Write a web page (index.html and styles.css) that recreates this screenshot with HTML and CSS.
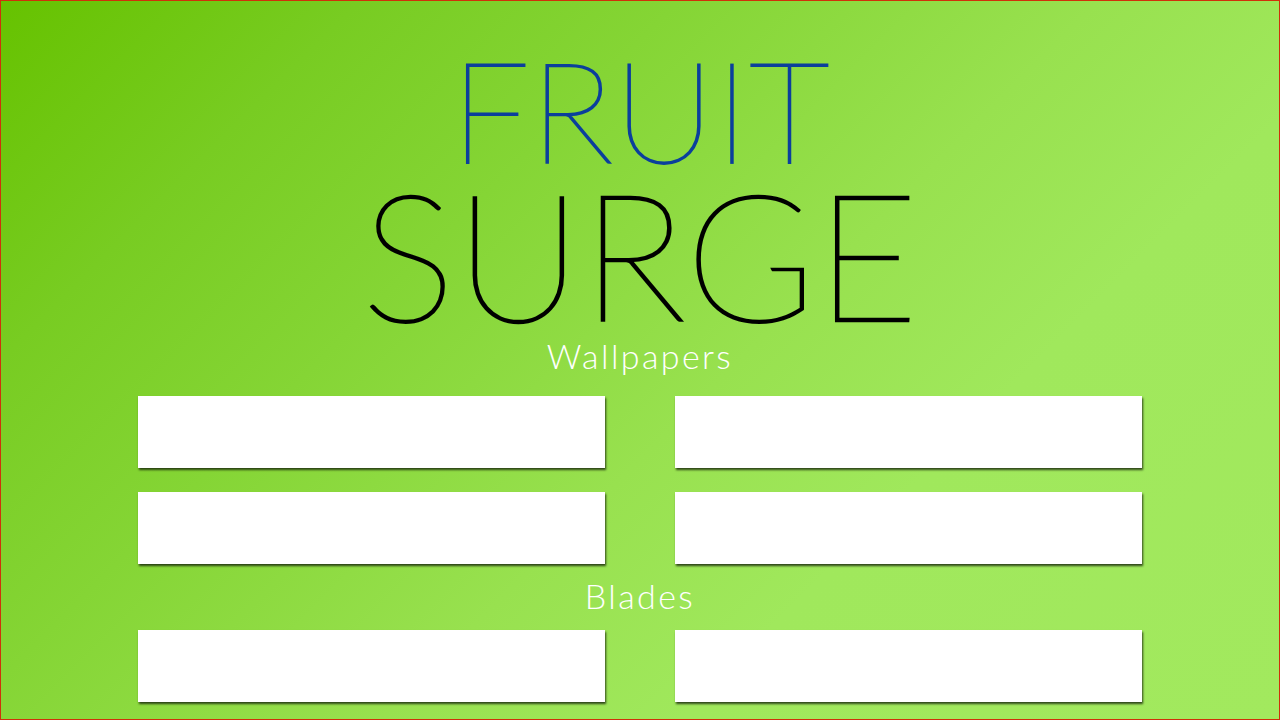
FILE: index.html
```html
<!DOCTYPE html>
<html lang="en">
<head>
<meta charset="utf-8">
<title>Fruit Surge</title>
<link rel="stylesheet" href="styles.css">
</head>
<body>
<main class="page">
  <h1 class="logo">
    <span class="logo-top">FRUIT</span>
    <span class="logo-bottom">SURGE</span>
  </h1>
  <section class="group group-wallpapers">
    <h2 class="group-title">Wallpapers</h2>
    <div class="cards">
      <div class="card"></div>
      <div class="card"></div>
      <div class="card"></div>
      <div class="card"></div>
    </div>
  </section>
  <section class="group group-blades">
    <h2 class="group-title">Blades</h2>
    <div class="cards">
      <div class="card"></div>
      <div class="card"></div>
    </div>
  </section>
</main>
</body>
</html>
```
FILE: styles.css
```css
* { box-sizing: border-box; }
html, body { margin: 0; padding: 0; }
body {
  width: 1280px;
  height: 720px;
  overflow: hidden;
  font-family: "Lato", "Inter", "Liberation Sans", sans-serif;
}
.page {
  width: 1280px;
  height: 720px;
  border: 1px solid #d0300a;
  background: linear-gradient(135deg, #66c200 0%, #78cc22 18%, #85d535 34%, #98e14f 55%, #a0e85c 70%, #a2e95e 100%);
  padding-top: 44px;
  overflow: hidden;
}
.logo {
  margin: 0;
  font-weight: 100;
  text-align: center;
}
.logo-top {
  display: block;
  font-size: 141px;
  line-height: 128px;
  color: #0b3f9c;
  -webkit-text-stroke: 1.8px #0b3f9c;
}
.logo-bottom {
  display: block;
  font-size: 176px;
  line-height: 160px;
  color: #000;
  -webkit-text-stroke: 2.4px #000;
}
.group-title {
  margin: 0;
  font-size: 34px;
  line-height: 40px;
  font-weight: 300;
  letter-spacing: 2.4px;
  color: #fff;
  text-align: center;
}
.group-wallpapers { margin-top: 3px; }
.group-wallpapers .group-title { margin-bottom: 20px; }
.group-blades { margin-top: 12px; }
.group-blades .group-title { margin-bottom: 14px; }
.cards {
  display: grid;
  grid-template-columns: 467px 467px;
  column-gap: 70px;
  row-gap: 24px;
  justify-content: center;
}
.card {
  height: 72px;
  background: #fff;
  box-shadow: 1px 2px 2px rgba(20, 30, 10, 0.8);
}
```
